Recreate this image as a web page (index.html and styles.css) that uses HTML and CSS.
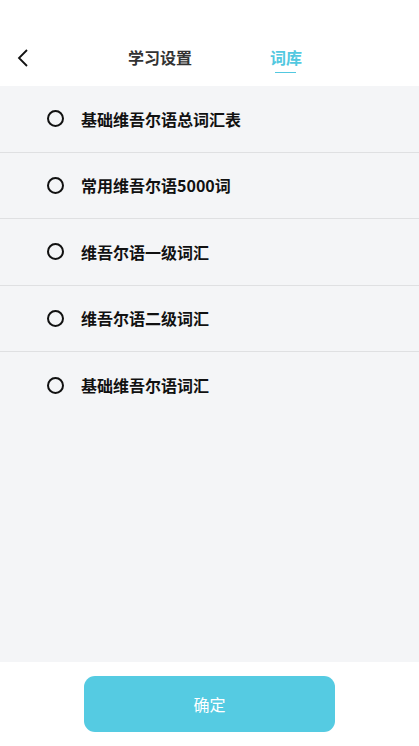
FILE: index.html
```html
<!DOCTYPE html>
<html lang="zh">
<head>
    <meta charset="UTF-8">
    <meta name="viewport" content="width=device-width, initial-scale=1.0">
    <title>词库</title>
    <link rel="stylesheet" href="styles.css">
</head>
<body>
    <div class="page">
        <div class="header">
            <div class="back">
                <svg width="12" height="18" viewBox="0 0 12 18">
                    <path d="M10 1 L2 9 L10 17" fill="none" stroke="#111" stroke-width="1.8"/>
                </svg>
            </div>
            <div class="tabs">
                <div class="tab">学习设置</div>
                <div class="tab active">词库</div>
            </div>
        </div>
        <div class="list">
            <div class="row"><span class="radio"></span><span class="name">基础维吾尔语总词汇表</span></div>
            <div class="row"><span class="radio"></span><span class="name">常用维吾尔语5000词</span></div>
            <div class="row"><span class="radio"></span><span class="name">维吾尔语一级词汇</span></div>
            <div class="row"><span class="radio"></span><span class="name">维吾尔语二级词汇</span></div>
            <div class="row last"><span class="radio"></span><span class="name">基础维吾尔语词汇</span></div>
        </div>
        <div class="footer">
            <button class="confirm">确定</button>
        </div>
    </div>
</body>
</html>
```

FILE: styles.css
```css
body {
    margin: 0;
    padding: 0;
    font-family: "Noto Sans CJK SC", "Noto Sans", sans-serif;
    background-color: #fff;
}

.page {
    display: flex;
    flex-direction: column;
    height: 746px;
}

.header {
    height: 86px;
    display: flex;
    align-items: flex-start;
    padding-top: 40px;
    box-sizing: border-box;
}

.back {
    padding: 8px 0 0 17px;
    width: 12px;
}

.tabs {
    display: flex;
    margin-left: 99px;
    gap: 78px;
}

.tab {
    font-size: 16px;
    font-weight: bold;
    color: #333;
    line-height: 34px;
    height: 34px;
}

.tab.active {
    color: #52c8e0;
    position: relative;
}

.tab.active::after {
    content: "";
    position: absolute;
    left: 5px;
    right: 6px;
    bottom: 1px;
    height: 1px;
    background-color: #52c8e0;
}

.list {
    flex: 1;
    background-color: #f4f5f7;
}

.row {
    height: 66.5px;
    box-sizing: border-box;
    display: flex;
    align-items: center;
    border-bottom: 1px solid #dfe0e2;
    padding-left: 47px;
}

.row.last {
    border-bottom: none;
}

.radio {
    width: 13px;
    height: 13px;
    border: 2px solid #111;
    border-radius: 50%;
    margin-right: 17px;
}

.name {
    font-size: 16px;
    font-weight: bold;
    color: #111;
}

.footer {
    height: 84px;
    display: flex;
    justify-content: center;
    padding-top: 14px;
    box-sizing: border-box;
}

.confirm {
    width: 251px;
    height: 56px;
    border: none;
    border-radius: 11px;
    background-color: #55cbe2;
    color: #fff;
    font-family: "Noto Sans CJK SC", sans-serif;
    font-size: 16px;
}
```
